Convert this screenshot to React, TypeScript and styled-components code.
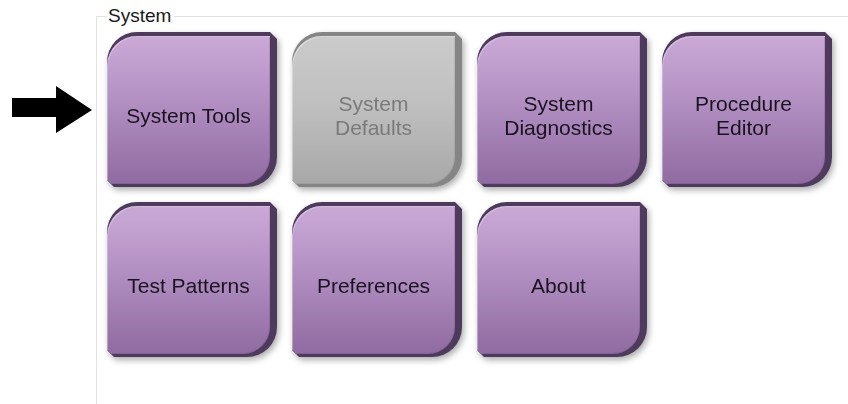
import React from "react";
import styled, { createGlobalStyle, css } from "styled-components";

const Global = createGlobalStyle`
  html, body { margin: 0; padding: 0; background: #ffffff; overflow: hidden; }
  body { font-family: "Liberation Sans", Arial, sans-serif; }
`;

const Page = styled.div`
  display: flex;
  align-items: flex-start;
  width: 848px;
  height: 404px;
  padding-top: 5px;
  box-sizing: border-box;
  overflow: hidden;
`;

const ArrowSlot = styled.div`
  flex: none;
  width: 96px;
  padding-top: 80px;
  display: flex;
`;

const Group = styled.fieldset`
  flex: 1;
  box-sizing: border-box;
  margin: 0;
  height: 399px;
  padding: 5px 0 0 10px;
  border: 1px solid #e2e2e2;
  border-right: none;
  border-bottom: none;
  min-inline-size: 0;
`;

const Legend = styled.legend`
  padding: 0 3px 0 1px;
  font-family: "Liberation Sans", Arial, sans-serif;
  font-size: 19px;
  line-height: 22px;
  color: #1a1a1a;
`;

const Grid = styled.div`
  display: grid;
  grid-template-columns: repeat(4, 170px);
  grid-auto-rows: 155px;
  column-gap: 15px;
  row-gap: 15px;
`;

const Cell = styled.div`
  filter: drop-shadow(2px 3px 3px rgba(0, 0, 0, 0.33));
`;

const Tile = styled.button<{ $disabled?: boolean }>`
  all: unset;
  box-sizing: border-box;
  display: block;
  width: 100%;
  height: 100%;
  cursor: pointer;
  border-radius: 30px 4px 30px 0;
  clip-path: polygon(0 0, calc(100% - 7px) 0, 100% 7px, 100% 100%, 7px 100%, 0 calc(100% - 7px));
  background: ${(p) => (p.$disabled ? "#858585" : "#4e3a5c")};
`;

const Face = styled.span<{ $disabled?: boolean }>`
  box-sizing: border-box;
  display: flex;
  align-items: center;
  justify-content: center;
  width: calc(100% - 7px);
  height: calc(100% - 7px);
  padding-top: 12px;
  border-radius: 30px 0 27px 0;
  text-align: center;
  font-family: "Liberation Sans", Arial, sans-serif;
  font-size: 21px;
  line-height: 24px;
  ${(p) =>
    p.$disabled
      ? css`
          background: linear-gradient(180deg, #cbcbcb 0%, #c0c0c0 45%, #a8a8a8 100%);
          color: #7a7a7a;
          box-shadow: inset 1px 1px 0 rgba(255, 255, 255, 0.45), inset 0 0 0 1px rgba(120, 120, 120, 0.2);
        `
      : css`
          background: linear-gradient(180deg, #caa9d7 0%, #b592c4 40%, #8f6ba1 100%);
          color: #1b1221;
          box-shadow: inset 1px 1px 0 rgba(255, 255, 255, 0.4), inset 0 0 0 1px rgba(90, 60, 105, 0.2);
        `}
`;

const Arrow = () => (
  <svg width="96" height="50" viewBox="0 0 96 50" aria-hidden="true">
    <polygon points="12,13 56,13 56,1 92,25 56,48 56,32 12,32" fill="#000" />
  </svg>
);

const items: { label: string[]; disabled?: boolean }[] = [
  { label: ["System Tools"] },
  { label: ["System", "Defaults"], disabled: true },
  { label: ["System", "Diagnostics"] },
  { label: ["Procedure", "Editor"] },
  { label: ["Test Patterns"] },
  { label: ["Preferences"] },
  { label: ["About"] },
];

export default function App() {
  return (
    <>
      <Global />
      <Page>
        <ArrowSlot>
          <Arrow />
        </ArrowSlot>
        <Group>
          <Legend>System</Legend>
          <Grid>
            {items.map((it) => (
              <Cell key={it.label.join(" ")}>
                <Tile $disabled={it.disabled}>
                  <Face $disabled={it.disabled}>
                    <span>
                      {it.label.map((l, i) => (
                        <React.Fragment key={l}>
                          {i > 0 && <br />}
                          {l}
                        </React.Fragment>
                      ))}
                    </span>
                  </Face>
                </Tile>
              </Cell>
            ))}
          </Grid>
        </Group>
      </Page>
    </>
  );
}
